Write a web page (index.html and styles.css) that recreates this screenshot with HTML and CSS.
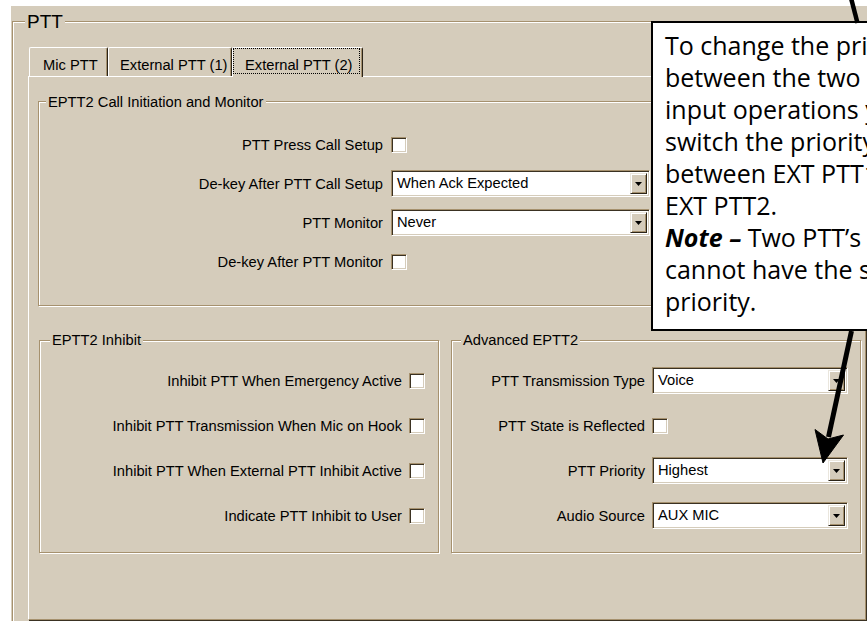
FILE: index.html
```html
<!DOCTYPE html>
<html lang="en">
<head>
<meta charset="utf-8">
<title>PTT</title>
<link rel="stylesheet" href="styles.css">
</head>
<body>
<div class="screen">
  <div class="window">
    <div class="group ptt">
      <span class="legend legend-big">PTT</span>

      <div class="tabs">
        <div class="tab tab-mic">Mic PTT</div>
        <div class="tab tab-ext1">External PTT (1)</div>
        <div class="tab tab-ext2 active"><span class="focus">External PTT (2)</span></div>
      </div>

      <div class="page">
        <div class="group call">
          <span class="legend legend-call">EPTT2 Call Initiation and Monitor</span>
          <div class="rows call-rows">
            <span class="lbl">PTT Press Call Setup</span>
            <span class="check"></span>

            <span class="lbl">De-key After PTT Call Setup</span>
            <div class="combo combo-wide"><span class="combo-text">When Ack Expected</span><span class="drop"><svg width="7" height="4" viewBox="0 0 7 4"><polygon points="0,0 7,0 3.5,4" fill="#000"/></svg></span></div>

            <span class="lbl">PTT Monitor</span>
            <div class="combo combo-wide"><span class="combo-text">Never</span><span class="drop"><svg width="7" height="4" viewBox="0 0 7 4"><polygon points="0,0 7,0 3.5,4" fill="#000"/></svg></span></div>

            <span class="lbl">De-key After PTT Monitor</span>
            <span class="check"></span>
          </div>
        </div>

        <div class="lower">
          <div class="group inhibit">
            <span class="legend legend-inhibit">EPTT2 Inhibit</span>
            <div class="rows inhibit-rows">
              <span class="lbl">Inhibit PTT When Emergency Active</span>
              <span class="check"></span>

              <span class="lbl">Inhibit PTT Transmission When Mic on Hook</span>
              <span class="check"></span>

              <span class="lbl">Inhibit PTT When External PTT Inhibit Active</span>
              <span class="check"></span>

              <span class="lbl">Indicate PTT Inhibit to User</span>
              <span class="check"></span>
            </div>
          </div>

          <div class="group advanced">
            <span class="legend legend-adv">Advanced EPTT2</span>
            <div class="rows adv-rows">
              <span class="lbl">PTT Transmission Type</span>
              <div class="combo combo-narrow"><span class="combo-text">Voice</span><span class="drop"><svg width="7" height="4" viewBox="0 0 7 4"><polygon points="0,0 7,0 3.5,4" fill="#000"/></svg></span></div>

              <span class="lbl">PTT State is Reflected</span>
              <span class="check"></span>

              <span class="lbl">PTT Priority</span>
              <div class="combo combo-narrow"><span class="combo-text">Highest</span><span class="drop"><svg width="7" height="4" viewBox="0 0 7 4"><polygon points="0,0 7,0 3.5,4" fill="#000"/></svg></span></div>

              <span class="lbl">Audio Source</span>
              <div class="combo combo-narrow"><span class="combo-text">AUX MIC</span><span class="drop"><svg width="7" height="4" viewBox="0 0 7 4"><polygon points="0,0 7,0 3.5,4" fill="#000"/></svg></span></div>
            </div>
          </div>
        </div>
      </div>
    </div>
  </div>

  <div class="callout">
    <div class="callout-line">To change the priority</div>
    <div class="callout-line">between the two PTT</div>
    <div class="callout-line">input operations you</div>
    <div class="callout-line">switch the priority</div>
    <div class="callout-line">between EXT PTT1 and</div>
    <div class="callout-line">EXT PTT2.</div>
    <div class="callout-line"><b class="note">Note –</b> Two PTT’s</div>
    <div class="callout-line">cannot have the same</div>
    <div class="callout-line">priority.</div>
  </div>

  <svg class="arrows" width="867" height="621" viewBox="0 0 867 621">
    <line x1="851" y1="-2" x2="857.5" y2="23" stroke="#000" stroke-width="4.5"/>
    <line x1="851.5" y1="331" x2="828.5" y2="437" stroke="#000" stroke-width="5"/>
    <path d="M823,463 L843.5,435 L828,439 L815,429.5 Z" fill="#000" stroke="#000" stroke-width="1" stroke-linejoin="miter"/>
  </svg>
</div>
</body>
</html>
```

FILE: styles.css
```css
* {
  box-sizing: border-box;
}

html,
body {
  margin: 0;
  padding: 0;
  background: #fff;
}

body {
  font-family: "Liberation Sans", Arial, sans-serif;
  font-size: 14.7px;
  color: #000;
}

.screen {
  position: relative;
  width: 867px;
  height: 621px;
  overflow: hidden;
  background: #fff;
}

/* dialog surface (Desert colour scheme) */
.window {
  margin: 6px 0 0 11px;
  height: 615px;
  background: #d5ccbb;
  padding: 15px 0 0 1px;
  overflow: hidden;
}

/* etched group box */
.group {
  display: flex;
  flex-direction: column;
  border: 1px solid #a6916e;
  box-shadow: inset 1px 1px 0 #fff, 1px 1px 0 #fff;
}

.legend {
  align-self: flex-start;
  height: 15px;
  line-height: 15px;
  padding: 0 2px;
  background: #d5ccbb;
  white-space: nowrap;
}

.ptt {
  width: 870px;
  height: 620px;
}

.legend-big {
  height: 19px;
  font-size: 19px;
  line-height: 19px;
  margin: -10px 0 0 12px;
}

/* tab strip */
.tabs {
  display: flex;
  align-items: flex-end;
  height: 29px;
  margin: 16px 0 0 16px;
}

.tab {
  height: 29px;
  padding-top: 10px;
  line-height: 15px;
  white-space: nowrap;
  background: #d5ccbb;
  border-top: 1px solid #fff;
  border-left: 1px solid #fff;
  border-right: 1px solid #2b2418;
  border-top-left-radius: 2px;
  border-top-right-radius: 2px;
  box-shadow: inset -1px 0 0 #a6916e;
}

.tab-mic {
  width: 79px;
  padding-left: 13px;
}

.tab-ext1 {
  width: 124px;
  padding-left: 11px;
}

.tab-ext2 {
  width: 131px;
  padding: 0;
}

.active {
  position: relative;
  z-index: 1;
  height: 30px;
  margin-bottom: -1px;
}

.focus {
  display: block;
  width: 127px;
  height: 26px;
  padding: 9px 0 0 11px;
  border: 1px dotted #000;
}

/* tab page */
.page {
  width: 838px;
  height: 544px;
  margin-left: 15px;
  border-top: 1px solid #fff;
  border-left: 1px solid #fff;
  border-right: 1px solid #a6916e;
  border-bottom: 1px solid #a6916e;
  box-shadow: 1px 1px 0 #3a3122;
}

.call {
  width: 823px;
  height: 205px;
  margin: 24px 0 0 9px;
}

.legend-call {
  margin: -7px 0 0 7px;
}

.rows {
  display: grid;
  align-items: center;
}

.lbl {
  justify-self: end;
  white-space: nowrap;
}

.call-rows {
  grid-template-columns: 344px 259px;
  grid-auto-rows: 39px;
  column-gap: 8px;
  margin-top: 15px;
}

.lower {
  display: flex;
  margin: 34px 0 0 10px;
}

.inhibit {
  width: 400px;
  height: 213px;
}

.advanced {
  width: 410px;
  height: 213px;
  margin-left: 12px;
}

.legend-inhibit {
  margin: -8px 0 0 10px;
}

.legend-adv {
  margin: -8px 0 0 9px;
}

.inhibit-rows {
  grid-template-columns: 362px 16px;
  grid-auto-rows: 45px;
  column-gap: 7px;
  margin-top: 10px;
}

.adv-rows {
  grid-template-columns: 193px 196px;
  grid-auto-rows: 45px;
  column-gap: 7px;
  margin-top: 10px;
}

/* sunken check box */
.check {
  width: 16px;
  height: 16px;
  background: #fff;
  border: 1px solid;
  border-color: #a6916e #fff #fff #a6916e;
  box-shadow: inset 1px 1px 0 #3a3122, inset -1px -1px 0 #d5ccbb;
}

/* drop-down list */
.combo {
  display: flex;
  align-items: stretch;
  height: 27px;
  padding: 2px;
  background: #fff;
  border: 1px solid;
  border-color: #a6916e #fff #fff #a6916e;
  box-shadow: inset 1px 1px 0 #3a3122, inset -1px -1px 0 #d5ccbb;
}

.combo-wide {
  width: 259px;
}

.combo-narrow {
  width: 196px;
}

.combo-text {
  flex: 1;
  padding-left: 3px;
  line-height: 21px;
  white-space: nowrap;
}

.drop {
  display: flex;
  align-items: center;
  justify-content: center;
  width: 17px;
  background: #d5ccbb;
  border: 1px solid;
  border-color: #eae6dd #2b2418 #2b2418 #eae6dd;
  box-shadow: inset 1px 1px 0 #fff, inset -1px -1px 0 #a6916e;
}

.drop svg {
  display: block;
  margin-top: 1px;
}

/* annotation box laid over the dialog */
.callout {
  position: absolute;
  left: 651px;
  top: 21px;
  width: 300px;
  height: 310px;
  padding: 6px 0 0 12px;
  background: #fff;
  border: 2px solid #000;
  font-family: "Open Sans", "Noto Sans", sans-serif;
  font-size: 25px;
  line-height: 32px;
  color: #000;
}

.callout-line {
  white-space: nowrap;
}

.note {
  font-style: italic;
  font-weight: 700;
}

.arrows {
  position: absolute;
  left: 0;
  top: 0;
  pointer-events: none;
}
```
